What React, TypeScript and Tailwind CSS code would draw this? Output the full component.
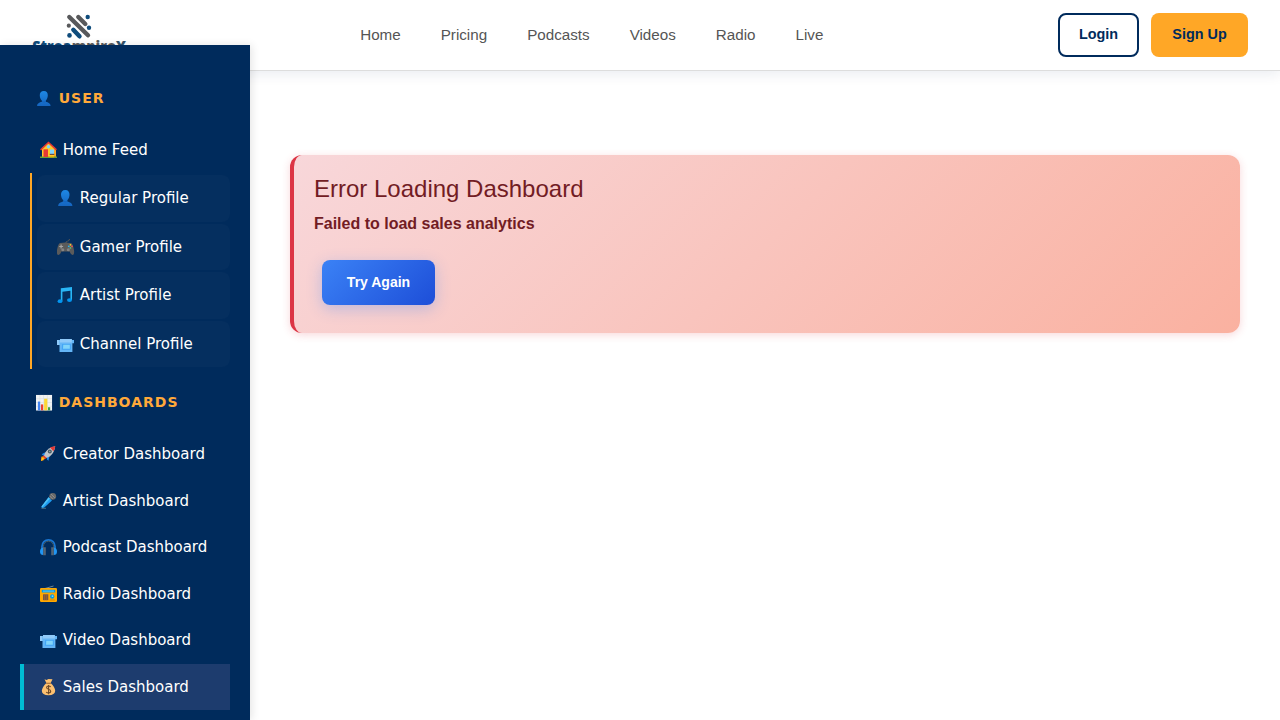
import type { ReactNode } from "react";

type IconName = "user" | "house" | "gamepad" | "music" | "camera" | "chart" | "rocket" | "mic" | "headphones" | "radio" | "money";

const art: Record<IconName, ReactNode> = {
  user: (
    <>
      <path d="M8.3 1C11.2 1 12.7 3 12.5 6C12.3 8.8 11 10.5 10.3 11.3V12.4C13 13.2 15.4 14 15.4 17H1.2C1.2 14 3.6 13.2 6.3 12.4V11.3C5.5 10.5 4.2 8.8 4 6C3.8 3 5.4 1 8.3 1Z" fill="url(#person)" />
      <path d="M6.3 11.5Q8.3 12.7 10.3 11.5V12.6Q8.3 13.8 6.3 12.6Z" fill="#1565c0" />
    </>
  ),
  house: (
    <>
      <path d="M2 7L8.5 2L15 7V16H2Z" fill="#ffca28" />
      <path d="M14 8V16H16V9Z" fill="#f9a825" />
      <path d="M0 15.5H17V17H0Z" fill="#689f38" />
      <path d="M0.6 8.8L8.5 1.5L16.4 8.8" fill="none" stroke="#e53935" strokeWidth="1.6" />
      <path d="M3.5 8.3H8V16H3.5Z" fill="#e53935" />
      <path d="M8.5 15.3H14V16.3H8.5Z" fill="#ffb300" />
      <circle cx="8.5" cy="5.7" r="1.7" fill="#81d4fa" />
      <path d="M10 8.5H14V13H10Z" fill="#81d4fa" />
      <path d="M9.7 12.8H14.3V14H9.7Z" fill="#6d4c41" />
    </>
  ),
  gamepad: (
    <>
      <path d="M9 5Q8.5 3.5 10.5 3.2T12.5 1" fill="none" stroke="#555" strokeWidth="1" />
      <path d="M3 5Q8.5 4 14 5Q16 6 17 12Q17.6 17 15.5 17Q14 17 12.5 13.5H4.5Q3 17 1.5 17Q-.6 17 0 12Q1 6 3 5Z" fill="#5b5b5b" />
      <path d="M4.1 6.5V10.5M2.2 8.5H6.1" stroke="#a5a5a5" strokeWidth="1.2" />
      <circle cx="5.8" cy="11.7" r="1.5" fill="#858585" />
      <circle cx="11.3" cy="11.7" r="1.5" fill="#858585" />
      <circle cx="13.4" cy="6.8" r=".9" fill="#ffca28" />
      <circle cx="11.8" cy="8.3" r=".9" fill="#29b6f6" />
      <circle cx="15" cy="8.3" r=".9" fill="#ef5350" />
      <circle cx="13.4" cy="9.9" r=".9" fill="#66bb6a" />
    </>
  ),
  music: (
    <>
      <path d="M3.8 2.2L15 1V14H13.4V4.8L5.4 5.8V15H3.8Z" fill="#29b6f6" />
      <ellipse cx="3" cy="15.2" rx="2.4" ry="1.9" fill="#0396f0" />
      <ellipse cx="12.5" cy="14.1" rx="2.5" ry="1.9" fill="#0396f0" />
    </>
  ),
  camera: (
    <>
      <path d="M0 5H3V4H14.8V5H17V8.2H15.4V17H2.5V10H0Z" fill="#64b5f6" />
      <path d="M3 4H14.8V7.5H3Z" fill="#90caf9" />
      <path d="M0 5H2.3V10H0Z" fill="#90caf9" />
      <path d="M5.2 9H13.8V14.7H4.7Z" fill="#42a5f5" />
      <path d="M6.3 9.8H12.8V13.8H6Z" fill="#81d4fa" />
    </>
  ),
  chart: (
    <>
      <path d="M0 1H17V17.5H0Z" fill="#f1f3f4" />
      <path d="M0 5H17M0 9H17M0 13H17M4 1V17M8 1V17M12 1V17" stroke="#cfd8dc" strokeWidth=".5" />
      <path d="M2 8H4.4V17.3H2Z" fill="#4285f4" />
      <path d="M5.2 11H7.6V17.3H5.2Z" fill="#ea4335" />
      <path d="M8.6 5H12V17.3H8.6Z" fill="#fdd835" />
      <path d="M12.7 14H15V17.3H12.7Z" fill="#43a047" />
    </>
  ),
  rocket: (
    <>
      <path d="M4.5 7.5L1.7 9.3L3.6 10.8L6.2 9.2ZM9.3 11.8L8.5 15.8L6.9 14.5L7 11.5Z" fill="#1e88e5" />
      <path d="M1.3 11.8L4.5 11L6 12.6L3.2 15.5L1 16Z" fill="#ff9800" />
      <path d="M1 16L2 13L4 13.5Z" fill="#ffca28" />
      <path d="M15.2 1.2Q9 2 5.2 7.5L3.8 11.2L5.8 13.2L9.8 11.5Q14.5 7.7 15.2 1.2Z" fill="#bfc4c8" />
      <path d="M15.2 1.2Q12.3 1.3 10 2.6L13.4 6.3Q15 4 15.2 1.2Z" fill="#e53935" />
      <path d="M3.6 10.2L6.8 13L5.2 13.8L3 11.7Z" fill="#e53935" />
      <circle cx="9.8" cy="6.5" r="2" fill="#455a64" />
      <circle cx="9.8" cy="6.5" r=".8" fill="#90a4ae" />
    </>
  ),
  mic: (
    <>
      <path d="M8.6 5.3L12 8.5L4 15.8L1.7 16.2L1.5 14.4Z" fill="#1e9bf0" />
      <path d="M8.6 5.3L10 6.6L2.5 15.2L1.5 14.4Z" fill="#4fc3f7" />
      <path d="M1.5 16.3H6" stroke="#607d8b" strokeWidth=".8" />
      <circle cx="12.7" cy="4.3" r="3.4" fill="#6a6a6a" />
      <path d="M11 2L14.8 5.8M9.8 4L12.8 7" stroke="#9e9e9e" strokeWidth=".7" />
    </>
  ),
  headphones: (
    <>
      <path d="M2 12V8.5C2 4.5 5 1.8 8.5 1.8S15 4.5 15 8.5V12" fill="none" stroke="#1976d2" strokeWidth="1.8" />
      <path d="M3.4 11V8.7C3.4 5.5 5.5 3.2 8.5 3.2S13.6 5.5 13.6 8.7V11" fill="none" stroke="#455a64" strokeWidth="1" />
      <path d="M3.2 9.5Q0 10 0 13.5T3.2 17ZM13.8 9.5Q17 10 17 13.5T13.8 17Z" fill="#2196f3" />
      <path d="M3.2 9.2H5.8V17.2H3.2ZM11.2 9.2H13.8V17.2H11.2Z" fill="#546575" />
    </>
  ),
  radio: (
    <>
      <path d="M5 3.5L13.5 1" stroke="#78909c" strokeWidth=".9" />
      <rect x="0" y="3" width="17" height="14" rx="1.2" fill="#ffa800" />
      <path d="M1.8 4.8H15.2V7.5H1.8Z" fill="#039be5" />
      <path d="M3 6.1H14" stroke="#81d4fa" strokeWidth=".8" />
      <path d="M3 9.3H8.3V15.2H3Z" fill="#795548" />
      <path d="M4.5 9.3V15.2M6.4 9.3V15.2" stroke="#a36b28" strokeWidth=".7" />
      <circle cx="12.2" cy="11.5" r="2.2" fill="#039be5" />
      <circle cx="12.5" cy="11.2" r=".9" fill="#81d4fa" />
      <path d="M9.7 15H14.8" stroke="#c77b00" strokeWidth=".8" />
    </>
  ),
  money: (
    <>
      <path d="M4.5 1.3L6.5 2L8.5 1L12.5 1.3L10.7 5Q15 9 15.2 12.8Q15 17.2 8.5 17.2T1.8 12.8Q2.2 9 6.4 5Z" fill="#fcc070" />
      <path d="M6.2 5.3H10.9" stroke="#a9713c" strokeWidth="1.2" />
      <path d="M10.7 8.7Q9.8 8 8.5 8Q6.6 8 6.6 9.6Q6.6 10.8 8.5 11.3Q10.7 11.8 10.7 13.3Q10.7 15 8.5 15Q7 15 6.2 14M8.6 6.9V16.2" fill="none" stroke="#6d4928" strokeWidth="1.1" />
    </>
  ),
};

function Icon({ name, size = 18 }: { name: IconName; size?: number }) {
  return <svg width={size} height={size} viewBox="0 0 18 18" className="shrink-0">{art[name]}</svg>;
}

const profiles: [IconName, string][] = [["user", "Regular Profile"], ["gamepad", "Gamer Profile"], ["music", "Artist Profile"], ["camera", "Channel Profile"]];
const dashboards: [IconName, string][] = [["rocket", "Creator Dashboard"], ["mic", "Artist Dashboard"], ["headphones", "Podcast Dashboard"], ["radio", "Radio Dashboard"], ["camera", "Video Dashboard"]];

function Heading({ icon, children }: { icon: IconName; children: ReactNode }) {
  return (
    <h3 className="flex h-5 items-center gap-[6px] pl-[15.7px] text-[14px] font-bold tracking-[1px] text-[#ffa93a]">
      <Icon name={icon} size={17} />{children}
    </h3>
  );
}

function Logo() {
  return (
    <svg width="96" height="45" viewBox="0 0 96 45" className="block">
      <defs>
        <linearGradient id="person" x1="0" y1="0" x2="0" y2="1"><stop stopColor="#1e88e5" /><stop offset="1" stopColor="#1565c0" /></linearGradient>
      </defs>
      <g strokeWidth="4.4" strokeLinecap="round">
        <path d="M37.3 17L56 35.3M46.3 17L53.3 24" stroke="#58595b" />
        <path d="M41.3 29.8L47.5 36.3" stroke="#0f4c7c" />
      </g>
      <g fill="#0f4c7c"><circle cx="55.7" cy="17" r="2.2" /><circle cx="57" cy="27.7" r="2.2" /><circle cx="37.5" cy="35.4" r="2.3" /></g>
      <circle cx="36.8" cy="25.7" r="2.1" fill="#58595b" />
      <g fontSize="16" fontWeight="800" fontFamily="Open Sans, sans-serif">
        <text x="0.3" y="51.6" textLength="39" lengthAdjust="spacingAndGlyphs" fill="#0f4c7c">Strea</text>
        <text x="39.8" y="51.6" textLength="54.5" lengthAdjust="spacingAndGlyphs" fill="#58595b">mpire<tspan fill="#34536c">X</tspan></text>
      </g>
    </svg>
  );
}

export default function App() {
  return (
    <div className="h-[720px] w-[1280px] overflow-hidden bg-white font-['Liberation_Sans',sans-serif]">
      <header className="relative flex h-[71px] items-center justify-between border-b border-[#ddd] px-8 shadow-[0_4px_12px_rgba(0,43,92,0.08)]">
        <div className="h-full w-[328.2px]"><Logo /></div>
        <nav className="flex flex-1 gap-10 text-[15.2px] text-[#555]">
          {["Home", "Pricing", "Podcasts", "Videos", "Radio", "Live"].map(t => <a key={t}>{t}</a>)}
        </nav>
        <div className="flex gap-3 text-[14.4px] font-bold text-[#002b5c]">
          <button className="h-11 w-[81px] rounded-lg border-2 border-[#002b5c]">Login</button>
          <button className="h-11 w-[97px] rounded-lg bg-[#ffa726]">Sign Up</button>
        </div>
      </header>
      <div className="relative -mt-[26px] flex h-[675px]">
        <aside className="w-[250px] shrink-0 bg-[#002b5c] px-5 pt-[43px] font-['DejaVu_Sans',sans-serif] text-[15px] whitespace-nowrap text-white shadow-[2px_0_8px_rgba(0,0,0,0.1)]">
          <Heading icon="user">USER</Heading>
          <div className="mt-[18.5px] flex h-[46.5px] items-center gap-[4.8px] pl-5"><Icon name="house" />Home Feed</div>
          <ul className="ml-[10px] flex flex-col gap-[2px] border-l-2 border-[#ffa726] py-[2px] pl-[5px]">
            {profiles.map(([i, t]) => (
              <li key={t} className="flex h-[46.5px] items-center gap-[4.8px] rounded-lg bg-white/2 pl-5"><Icon name={i} />{t}</li>
            ))}
          </ul>
          <div className="mt-[23px]"><Heading icon="chart">DASHBOARDS</Heading></div>
          <ul className="mt-[19px]">
            {dashboards.map(([i, t]) => (
              <li key={t} className="flex h-[46.5px] items-center gap-[4.8px] pl-5"><Icon name={i} />{t}</li>
            ))}
            <li className="flex h-[46.5px] items-center gap-[4.8px] border-l-4 border-[#00bcd4] bg-[#1d3c6e] pl-4"><Icon name="money" />Sales Dashboard</li>
          </ul>
        </aside>
        <main className="flex-1 px-10 pt-[110px]">
          <section className="h-[178px] rounded-xl border-l-4 border-[#dc3545] bg-[linear-gradient(135deg,#f8d7da,#fab1a0)] px-5 pt-4 text-[#721c24] shadow-[0_2px_8px_rgba(220,53,69,0.2)]">
            <h2 className="text-[24px] leading-9">Error Loading Dashboard</h2>
            <p className="mt-[5px] text-[16px] font-bold leading-6">Failed to load sales analytics</p>
            <button className="ml-2 mt-6 h-[45px] w-[113px] rounded-lg bg-[linear-gradient(135deg,#3b82f6,#1d4ed8)] text-[14px] font-bold text-white shadow-[0_4px_15px_rgba(59,130,246,0.3)]">Try Again</button>
          </section>
        </main>
      </div>
    </div>
  );
}
